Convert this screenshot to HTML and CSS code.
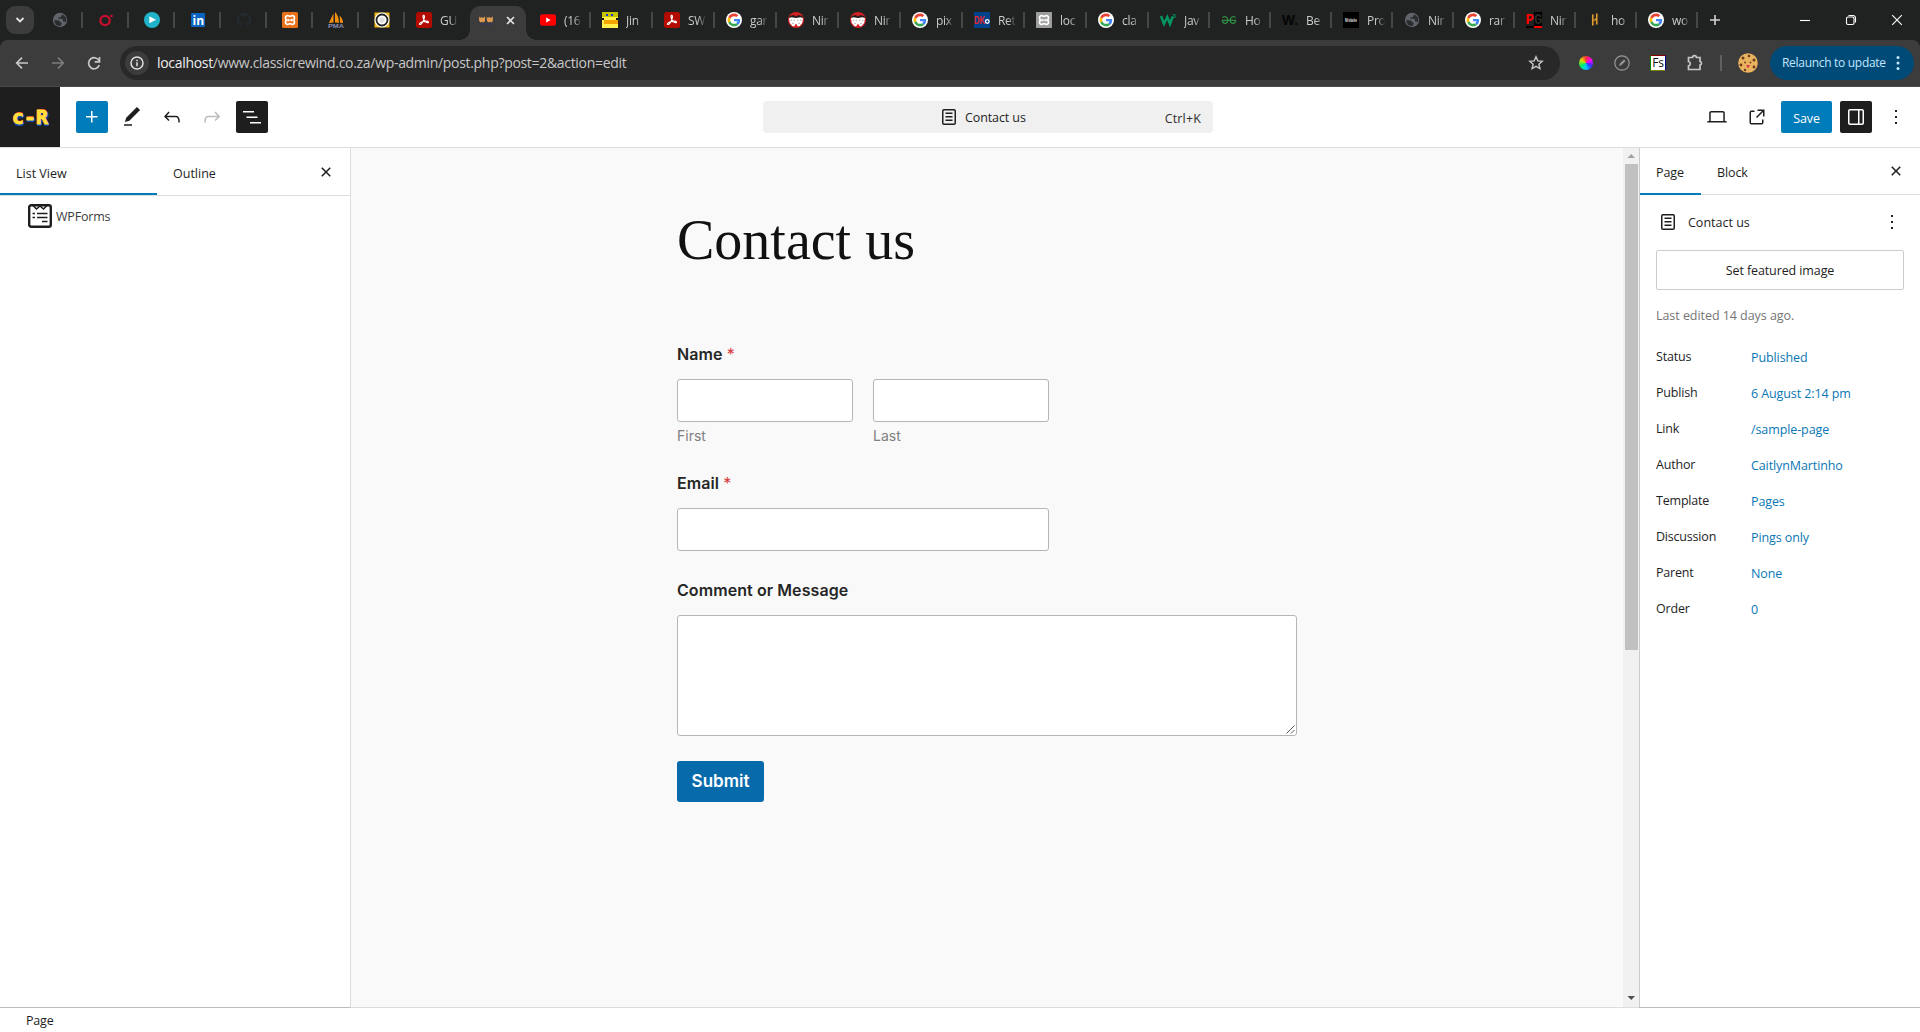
FILE: index.html
```html
<!DOCTYPE html>
<html lang="en">
<head>
<meta charset="utf-8">
<title>Contact us</title>
<link rel="stylesheet" href="styles.css">
</head>
<body>
<svg class="defs" aria-hidden="true">
  <symbol id="google" viewBox="0 0 48 48"><circle cx="24" cy="24" r="24" fill="#fff"/><g transform="translate(4.8 4.8) scale(.8)"><path fill="#EA4335" d="M24 9.5c3.54 0 6.71 1.22 9.21 3.6l6.85-6.85C35.9 2.38 30.47 0 24 0 14.62 0 6.51 5.38 2.56 13.22l7.98 6.19C12.43 13.72 17.74 9.5 24 9.5z"/><path fill="#4285F4" d="M46.98 24.55c0-1.57-.15-3.09-.38-4.55H24v9.02h12.94c-.58 2.96-2.26 5.48-4.78 7.18l7.73 6c4.51-4.18 7.09-10.36 7.09-17.65z"/><path fill="#FBBC05" d="M10.53 28.59c-.48-1.45-.76-2.99-.76-4.59s.27-3.14.76-4.59l-7.98-6.19C.92 16.46 0 20.12 0 24c0 3.88.92 7.54 2.56 10.78l7.97-6.19z"/><path fill="#34A853" d="M24 48c6.48 0 11.93-2.13 15.89-5.81l-7.73-6c-2.15 1.45-4.92 2.3-8.16 2.3-6.26 0-11.57-4.22-13.47-9.91l-7.98 6.19C6.51 42.62 14.62 48 24 48z"/></g></symbol>
  <symbol id="globe" viewBox="0 0 16 16"><circle cx="8" cy="8" r="7.2" fill="#60646a"/><path d="M2.300 8.300h3.200c1.500 0 2.300.8 2.300 2h1.700v2.200L8 14.200C4.800 14.200 2.300 11.500 2.300 8.300zM9.500 2.200v1.600c0 .9-.7 1.500-1.600 1.500H6.400v1.500h3.300c.8 0 1.300.6 1.300 1.400v1.300h1.200c.7 0 1.200.4 1.400 1 1.400-2.300 1-6.600-4.100-8.300z" fill="#202221" opacity=".85"/></symbol>
  <symbol id="acrobat" viewBox="0 0 16 16"><rect width="16" height="16" rx="2.500" fill="#b30b00"/><path d="M7.400 3.300c1.600-.4 1 2.600.2 4.800-.8 2-2.500 4.600-3.700 4.400-1.200-.4.500-2.300 3.200-2.900 2.300-.6 5.100-.6 5.400.5.100 1.100-2 .8-3.500-1C7.400 7.200 6.300 3.800 7.400 3.300z" fill="none" stroke="#fff" stroke-width="1.200"/></symbol>
  <symbol id="xampp" viewBox="0 0 16 16"><path d="M4.800 3.700c1.500-.6 2.200.6 3.200.6s1.700-1.200 3.200-.6c2 .9 1.300 2.900.5 4.300.8 1.400 1.500 3.400-.5 4.300-1.500.6-2.200-.6-3.200-.6s-1.700 1.200-3.200.6c-2-.9-1.300-2.900-.5-4.300-.8-1.400-1.500-3.400.5-4.300z" fill="none" stroke="#fff" stroke-width="1.700"/><path d="M6 6.700v2.800M10 6.700v2.800M6 8.100h4" stroke="#fff" stroke-width="1.300"/></symbol>
  <symbol id="ninja" viewBox="0 0 16 16"><circle cx="8" cy="8" r="8" fill="#d42025"/><path d="M1 6.500c1.500-2.500 5.500-2.500 7-.5 1.500-2 5.500-2 7 .5l-.8 4.500-2.700 3.200H9.700L8 11.500l-1.700 2.700H4.500L1.800 11z" fill="#fff"/><path d="M.8 6C1.500 3 6 2.500 8 4.800c2-2.300 6.500-1.800 7.200 1.200l-2.700-.8L8 6l-4.500-.8z" fill="#221c1c"/><path d="M2.800 8.200h1.300M5.700 8.200H7M9.200 8.200h1.300M12 8.200h1.300M4.200 11.300h1.500M10.300 11.300h1.500" stroke="#777" stroke-width=".7"/></symbol>
  <symbol id="plus" viewBox="0 0 24 24"><path d="M11 12.500V17.500H12.500V12.500H17.500V11H12.500V6H11V11H6V12.500H11Z"/></symbol>
  <symbol id="page" viewBox="0 0 24 24"><path d="M15.500 7.500h-7V9h7V7.500Zm-7 3.500h7v1.500h-7V11Zm7 3.500h-7V16h7v-1.500Z"/><path fill-rule="evenodd" d="M17 4H7a2 2 0 0 0-2 2v12a2 2 0 0 0 2 2h10a2 2 0 0 0 2-2V6a2 2 0 0 0-2-2ZM7 5.500h10a.5.5 0 0 1 .5.5v12a.5.5 0 0 1-.5.5H7a.5.5 0 0 1-.5-.5V6a.5.5 0 0 1 .5-.5Z"/></symbol>
  <symbol id="more" viewBox="0 0 24 24"><path d="M13 19h-2v-2h2v2zm0-6h-2v-2h2v2zm0-6h-2V5h2v2z"/></symbol>
  <symbol id="close" viewBox="0 0 24 24"><path d="M12 13.060l3.712 3.713 1.061-1.060L13.061 12l3.712-3.712-1.060-1.060L12 10.938 8.288 7.227l-1.061 1.060L10.939 12l-3.712 3.712 1.060 1.061L12 13.061z"/></symbol>
</svg>

<header class="tabstrip">
  <button class="tab-search"><svg width="10" height="8" viewBox="0 0 10 8"><path d="M1.500 2 5 5.500 8.500 2" fill="none" stroke="#e3e3e3" stroke-width="1.800"/></svg></button>
  <div class="pinned"><svg class="fav"><use href="#globe"/></svg></div>
  <div class="pinned"><svg class="fav" viewBox="0 0 16 16"><circle cx="7" cy="8.500" r="4.700" fill="none" stroke="#c8102e" stroke-width="2.200"/><circle cx="13.500" cy="4" r="1.300" fill="#c8102e"/></svg></div>
  <div class="pinned"><svg class="fav" viewBox="0 0 16 16"><circle cx="8" cy="8" r="8" fill="#1fb2c9"/><path d="M5.300 4.300v7L12 7.800z" fill="#fff"/></svg></div>
  <div class="pinned"><svg class="fav" viewBox="0 0 16 16"><rect x="1" y="1" width="14" height="14" rx="1" fill="#0a66c2"/><text x="2.600" y="12.800" class="fav-in">in</text></svg></div>
  <div class="pinned"><svg class="fav" viewBox="0 0 16 16"><path fill="#24292f" d="M8 .5a7.500 7.500 0 0 0-2.400 14.600c.4.100.5-.2.500-.4v-1.400c-2 .5-2.500-.9-2.500-.9-.3-.8-.8-1-.8-1-.7-.5 0-.5 0-.5.700.1 1.100.8 1.100.8.700 1.200 1.800.8 2.200.6.100-.5.300-.8.500-1-1.700-.2-3.400-.8-3.400-3.700 0-.8.300-1.500.8-2-.1-.2-.4-1 .1-2 0 0 .6-.2 2 .8a7 7 0 0 1 3.800 0c1.400-1 2-.8 2-.8.500 1 .2 1.800.1 2 .5.500.8 1.200.8 2 0 2.900-1.700 3.500-3.400 3.700.3.200.5.700.5 1.400v2c0 .2.100.5.500.4A7.500 7.500 0 0 0 8 .5z"/></svg></div>
  <div class="pinned"><svg class="fav" viewBox="0 0 16 16"><rect width="16" height="16" rx="1.500" fill="#e8711a"/><use href="#xampp" width="16" height="16"/></svg></div>
  <div class="pinned"><svg class="fav" viewBox="0 0 16 16"><path d="M5.500 1.500v9L.8 11zM7 0v10.500l4 .3C11 6 9 2 7 0zM11.500 3.500c.7 3 .5 5 .3 7.300L15 11c0-3-1.500-6-3.500-7.500z" fill="#f29111"/><text x="0" y="15.800" textLength="16" lengthAdjust="spacingAndGlyphs" class="fav-pma">PMA</text></svg></div>
  <div class="pinned"><svg class="fav" viewBox="0 0 16 16"><rect x=".5" y=".5" width="15" height="15" fill="#f3b51b"/><circle cx="8" cy="8" r="7.500" fill="#fff"/><circle cx="8" cy="8" r="5.500" fill="#fff" stroke="#222" stroke-width="1.800"/><path d="M6 5.500h4l1 3-3 3-3-3z" fill="#ddd"/></svg></div>
  <div class="tab tab-last"><svg class="fav"><use href="#acrobat"/></svg><span>GU</span></div>
  <div class="tab-active"><svg class="fav" viewBox="0 0 16 16"><path d="M1 4.500 2.500 6 3.500 4.800 4.700 6 7 4.500V9L5.500 10.500 4 9.800 2.500 10.500 1.200 9zM8.500 4.500 10 6l1.200-1.200L12.500 6 15 4.500 14.800 9l-1.300 1.500-1.500-.7-1.500.7L9 9z" fill="#dd9a50"/><path d="M1 12h14" stroke="#34345c" stroke-width="1.300"/></svg><svg width="9" height="9" viewBox="0 0 9 9"><path d="M1 1l7 7M8 1L1 8" stroke="#e3e3e3" stroke-width="1.600"/></svg></div>
  <div class="tab wide-tab"><svg class="fav" viewBox="0 0 16 16"><rect y="2.300" width="16" height="11.400" rx="2.500" fill="#f00"/><path d="M6.200 5.500v5L10.700 8z" fill="#fff"/></svg><span>(16</span></div>
  <div class="tab wide-tab"><svg class="fav" viewBox="0 0 16 16"><path fill="#fff04a" d="M0 0h16v16H0z"/><path fill="#c5c400" d="M0 0h16v5H0z"/><path fill="#1c35d8" d="M4 2h2v2H4zM9 2h2v2H9z"/><path fill="#111" d="M0 6h2v2H0zM14 6h2v2h-2z"/><path fill="#f3a400" d="M2 8h14v4H2z"/></svg><span>Jin</span></div>
  <div class="tab wide-tab"><svg class="fav"><use href="#acrobat"/></svg><span>SW</span></div>
  <div class="tab wide-tab"><svg class="fav"><use href="#google"/></svg><span>gar</span></div>
  <div class="tab wide-tab"><svg class="fav"><use href="#ninja"/></svg><span>Nir</span></div>
  <div class="tab wide-tab"><svg class="fav"><use href="#ninja"/></svg><span>Nir</span></div>
  <div class="tab wide-tab"><svg class="fav"><use href="#google"/></svg><span>pix</span></div>
  <div class="tab wide-tab"><svg class="fav" viewBox="0 0 16 16"><path fill="#00438a" d="M0 0h16v16H0z"/><text x="0" y="12" textLength="11" lengthAdjust="spacingAndGlyphs" class="fav-dk">DK</text><circle cx="13.300" cy="9.500" r="1.800" fill="none" stroke="#fff" stroke-width="1.300"/></svg><span>Ret</span></div>
  <div class="tab wide-tab"><svg class="fav" viewBox="0 0 16 16"><path fill="#9d9d9d" d="M0 0h16v16H0z"/><use href="#xampp" width="16" height="16"/></svg><span>loc</span></div>
  <div class="tab wide-tab"><svg class="fav"><use href="#google"/></svg><span>cla</span></div>
  <div class="tab"><svg class="fav" viewBox="0 0 16 16"><path d="M1 4l3 8 3.300-7 2.700 7 2.700-7.500" fill="none" stroke="#059862" stroke-width="2.400"/><text x="12.600" y="6" class="fav-w3">3</text></svg><span>Jav</span></div>
  <div class="tab"><svg class="fav" viewBox="0 0 16 16"><path d="M1 8.300h14M1.500 5.500C4 3.800 6.800 5 6.800 8c0 4-5 4.600-5.500.5M14.500 5.500C12 3.800 9.200 5 9.200 8c0 4 5 4.600 5.500.5" fill="none" stroke="#2f8d46" stroke-width="1.300"/></svg><span>Ho</span></div>
  <div class="tab"><svg class="fav" viewBox="0 0 16 16"><text x="0" y="13" textLength="16" lengthAdjust="spacingAndGlyphs" class="fav-w">W.</text></svg><span>Be</span></div>
  <div class="tab"><svg class="fav" viewBox="0 0 16 16"><path fill="#000" d="M0 0h16v16H0z"/><text x="2" y="9.500" textLength="12" lengthAdjust="spacingAndGlyphs" class="fav-mk">Mixkeke</text></svg><span>Pro</span></div>
  <div class="tab"><svg class="fav"><use href="#globe"/></svg><span>Nir</span></div>
  <div class="tab"><svg class="fav"><use href="#google"/></svg><span>rar</span></div>
  <div class="tab"><svg class="fav" viewBox="0 0 16 16"><path fill="#000" d="M8 0h8v14H0v2h8v-2H8z"/><text x="-.5" y="11.500" class="fav-p">P</text><text x="8" y="11.500" class="fav-g">G</text><path fill="#f00" d="M8 14h8v2H8z"/></svg><span>Nir</span></div>
  <div class="tab"><svg class="fav" viewBox="0 0 16 16"><path d="M5.800 2.500v11M9.800 1.500v11M5.500 9l4.800-2.500" stroke="#dfa032" stroke-width="1.700"/><path d="M7 3.500v9.500M10.900 2v9.500" stroke="#693c18" stroke-width=".7"/></svg><span>ho</span></div>
  <div class="tab"><svg class="fav"><use href="#google"/></svg><span>wo</span></div>
  <svg class="new-tab" width="12" height="12" viewBox="0 0 12 12"><path d="M6 1v10M1 6h10" stroke="#d4d4d4" stroke-width="1.600"/></svg>
  <div class="window-controls">
    <svg width="12" height="12" viewBox="0 0 12 12"><path d="M1 6.500h10"/></svg>
    <svg width="12" height="12" viewBox="0 0 12 12"><rect x="1.500" y="3" width="7.500" height="7.500" rx="1.500"/><path d="M3.500 1.500H8a2.500 2.500 0 0 1 2.500 2.500v4.500"/></svg>
    <svg width="12" height="12" viewBox="0 0 12 12"><path d="M1.200 1.200l9.600 9.600M10.800 1.200l-9.600 9.600"/></svg>
  </div>
</header>

<nav class="toolbar">
  <div class="nav-buttons">
    <svg viewBox="0 0 20 20"><path d="M16 10H5M10 4.700 4.700 10l5.300 5.300"/></svg>
    <svg class="dim" viewBox="0 0 20 20"><path d="M4 10h11M10 4.700l5.300 5.300-5.300 5.300"/></svg>
    <svg viewBox="0 0 20 20"><path d="M15.300 8.500A5.500 5.500 0 1 0 15.300 12M15.500 4v4.800H10.700"/></svg>
  </div>
  <div class="address">
    <span class="info"><svg width="16" height="16" viewBox="0 0 16 16"><circle cx="8" cy="8" r="6" fill="none" stroke="#dedede" stroke-width="1.500"/><path d="M8 7.200v4M8 4.700v1.500" stroke="#dedede" stroke-width="1.500"/></svg></span>
    <span class="url"><b>localhost</b>/www.classicrewind.co.za/wp-admin/post.php?post=2&amp;action=edit</span>
    <svg class="star" width="16" height="16" viewBox="0 0 16 16"><path d="M8 1.800l1.800 4.100 4.400.4-3.300 2.900 1 4.400L8 11.300l-3.900 2.300 1-4.400-3.300-2.900 4.400-.4z" fill="none" stroke="#c7c7c7" stroke-width="1.400"/></svg>
  </div>
  <div class="extensions">
    <i class="wheel"></i>
    <svg width="16" height="16" viewBox="0 0 16 16"><circle cx="8" cy="8" r="7.200" fill="none" stroke="#9a9a9a" stroke-width="1.200"/><path d="M5 11l1-2.500 4-4L11.500 6l-4 4z" fill="#9a9a9a"/></svg>
    <span class="fs">Fs</span>
    <svg width="18" height="18" viewBox="0 0 18 18"><path d="M3 3.500h3.600a1.900 1.900 0 0 1 3.800 0H14v3.900a1.900 1.900 0 0 1 0 3.700V15.500H2.500v-3.700a2.200 2.200 0 0 0 0-4.300V3.500z" fill="none" stroke="#c7c7c7" stroke-width="1.700"/></svg>
  </div>
  <svg class="avatar" width="20" height="20" viewBox="0 0 20 20"><circle cx="10" cy="10" r="9.800" fill="#e9b35f"/><g fill="#6b3a1e"><circle cx="5" cy="5" r="1.500"/><circle cx="11" cy="3" r="1.300"/><circle cx="16" cy="7" r="1.500"/><circle cx="3" cy="12" r="1.400"/><circle cx="16" cy="14" r="1.400"/><circle cx="7" cy="17" r="1.200"/><circle cx="7" cy="9.500" r=".9"/><circle cx="12.500" cy="9.500" r=".9"/></g><path d="M8 12h4l-2 3.500z" fill="#d83b45"/></svg>
  <button class="relaunch"><span>Relaunch to update</span><svg width="4" height="16" viewBox="0 0 4 16"><g fill="#c2e7ff"><circle cx="2" cy="2.500" r="1.500"/><circle cx="2" cy="8" r="1.500"/><circle cx="2" cy="13.500" r="1.500"/></g></svg></button>
</nav>

<section class="editor-header">
  <div class="site-logo"><span>c-R</span></div>
  <div class="tools">
    <button class="ibtn primary"><svg><use href="#plus"/></svg></button>
    <button class="ibtn"><svg viewBox="0 0 24 24"><path d="m20.100 5.100L16.900 2 6.200 12.700l-1.300 4.400 4.500-1.300L20.100 5.100zM4 20.800h8v-1.500H4v1.500z"/></svg></button>
    <button class="ibtn"><svg viewBox="0 0 24 24"><path d="M18.300 11.700c-.6-.6-1.400-.9-2.300-.9H6.700l2.900-3.300-1.100-1-4.500 5L8.500 16l1-1-2.700-2.700H16c.5 0 .9.200 1.300.5 1 1 1 3.400 1 4.500v.3h1.500v-.2c0-1.500 0-4.300-1.500-5.700z"/></svg></button>
    <button class="ibtn disabled"><svg viewBox="0 0 24 24"><path d="M15.600 6.500l-1.100 1 2.900 3.300H8c-.9 0-1.700.3-2.300.9-1.400 1.500-1.400 4.200-1.400 5.600v.2h1.500v-.3c0-1.100 0-3.500 1-4.500.3-.3.700-.5 1.300-.5h9.200L14.500 15l1.100 1.100 4.600-4.600-4.600-5z"/></svg></button>
    <button class="ibtn pressed"><svg viewBox="0 0 24 24"><path d="M3 6h11v1.500H3V6Zm3.500 5.500h11V13h-11v-1.500ZM21 17H10v1.500h11V17Z"/></svg></button>
  </div>
  <div class="command"><svg class="i24"><use href="#page"/></svg><span class="doc-title">Contact us</span><span class="shortcut">Ctrl+K</span></div>
  <div class="actions">
    <button class="ibtn"><svg viewBox="0 0 24 24"><path fill-rule="evenodd" d="M20.500 16h-.7V8c0-1.100-.9-2-2-2H6.200c-1.100 0-2 .9-2 2v8h-.7c-.8 0-1.500.7-1.500 1.500h20c0-.8-.7-1.500-1.500-1.500zM5.700 8c0-.3.200-.5.500-.5h11.600c.3 0 .5.200.5.500v8H5.700V8z"/></svg></button>
    <button class="ibtn"><svg viewBox="0 0 24 24"><path d="M19.500 4.500h-7V6h4.440l-5.970 5.970 1.060 1.060L18 7.060v4.440h1.500v-7Zm-13 1a2 2 0 0 0-2 2v10a2 2 0 0 0 2 2h10a2 2 0 0 0 2-2v-3H17v3a.5.5 0 0 1-.5.5h-10a.5.5 0 0 1-.5-.5v-10a.5.5 0 0 1 .5-.5h3V5.500h-3Z"/></svg></button>
    <button class="save">Save</button>
    <button class="ibtn pressed"><svg viewBox="0 0 24 24"><path fill-rule="evenodd" d="M18 4H6c-1.100 0-2 .9-2 2v12c0 1.100.9 2 2 2h12c1.100 0 2-.9 2-2V6c0-1.100-.9-2-2-2zm-4 14.500H6c-.3 0-.5-.2-.5-.5V6c0-.3.2-.5.5-.5h8v13zm4.500-.5c0 .3-.2.5-.5.5h-2.500v-13H18c.3 0 .5.200.5.500v12z"/></svg></button>
    <button class="ibtn"><svg><use href="#more"/></svg></button>
  </div>
</section>

<main class="workspace">
  <aside class="list-panel">
    <div class="list-tabs"><div class="ltab on">List View</div><div class="ltab">Outline</div><svg class="i24"><use href="#close"/></svg></div>
    <div class="block-row">
      <svg width="24" height="24" viewBox="0 0 24 24"><rect x="1.200" y="1.200" width="21.600" height="21.600" rx="2" fill="#fff" stroke="#1e1e1e" stroke-width="2.400"/><path d="M5 1.500 8.500 5 12 2l3.500 3L19 1.500M4.500 9.500H7M9 9.500h10.500M4.500 13.500H7M9 13.500h10.500M14 17.500h5.500" fill="none" stroke="#1e1e1e" stroke-width="1.500"/></svg>
      <span>WPForms</span>
    </div>
  </aside>
  <div class="canvas">
    <article class="post">
      <h1>Contact us</h1>
      <label class="name">Name <em>*</em></label>
      <div class="pair"><div><div class="field"></div><small>First</small></div><div><div class="field"></div><small>Last</small></div></div>
      <label class="email">Email <em>*</em></label>
      <div class="field wide"></div>
      <label class="comment">Comment or Message</label>
      <div class="area"><svg width="9" height="9" viewBox="0 0 9 9"><path d="M.5 8.500l8-8M5 8.500l3.500-3.500" stroke="#555"/></svg></div>
      <button class="submit">Submit</button>
    </article>
    <div class="scrollbar">
      <svg width="16" height="16" viewBox="0 0 16 16"><path d="M4.500 10h7.500L8.250 6z" fill="#a3a3a3"/></svg>
      <div class="thumb"></div>
      <svg width="16" height="16" viewBox="0 0 16 16"><path d="M4.500 5h7.500L8.250 9z" fill="#505050"/></svg>
    </div>
  </div>
  <aside class="settings">
    <div class="set-tabs"><div class="stab on">Page</div><div class="stab">Block</div><svg class="i24"><use href="#close"/></svg></div>
    <div class="summary">
      <div class="card"><svg class="i24"><use href="#page"/></svg><span>Contact us</span><svg class="i24 more"><use href="#more"/></svg></div>
      <button class="featured">Set featured image</button>
      <p class="edited">Last edited 14 days ago.</p>
      <dl>
        <dt>Status</dt><dd>Published</dd>
        <dt>Publish</dt><dd>6 August 2:14 pm</dd>
        <dt>Link</dt><dd>/sample-page</dd>
        <dt>Author</dt><dd>CaitlynMartinho</dd>
        <dt>Template</dt><dd>Pages</dd>
        <dt>Discussion</dt><dd>Pings only</dd>
        <dt>Parent</dt><dd>None</dd>
        <dt>Order</dt><dd>0</dd>
      </dl>
    </div>
  </aside>
</main>
<footer class="breadcrumb">Page</footer>
</body>
</html>
```
FILE: styles.css
```css
* { box-sizing: border-box; }
body { margin: 0; width: 1920px; height: 1032px; overflow: hidden; display: flex; flex-direction: column; background: #fff; color: #1e1e1e; font: 12.5px/20px "Open Sans", "Noto Sans", sans-serif; letter-spacing: -.2px; }
button { border: 0; padding: 0; background: none; font: inherit; letter-spacing: inherit; color: inherit; }
svg { display: block; flex: none; }
.defs { position: absolute; width: 0; height: 0; }
.i24 { width: 24px; height: 24px; fill: #1e1e1e; }

/* browser tab strip */
.tabstrip { height: 40px; flex: none; display: flex; align-items: center; background: #202221; padding-left: 6px; }
.tab-search { width: 28px; height: 28px; margin-right: 3px; border-radius: 9px; background: #3c3c3c; display: grid; place-items: center; }
.fav { width: 16px; height: 16px; }
.pinned { width: 46px; height: 16px; padding-left: 15px; border-right: 2px solid #444746; }
.tab { width: 61px; height: 16px; padding-left: 11px; border-right: 2px solid #444746; display: flex; gap: 8px; flex: none; }
.wide-tab { width: 62px; }
.tab span { width: 20px; margin-right: -2px; white-space: nowrap; color: #c9cbca; font-size: 12px; line-height: 18px; height: 20px; letter-spacing: -.3px; -webkit-mask-image: linear-gradient(90deg, #000 50%, transparent 90%); mask-image: linear-gradient(90deg, #000 50%, transparent 90%); }
.tab-last { width: 65px; border: 0; }
.tab-active { position: relative; width: 56px; height: 34px; align-self: flex-end; margin-right: 3px; padding: 0 11px 0 8px; border-radius: 10px 10px 0 0; background: #3c3c3c; display: flex; align-items: center; justify-content: space-between; }
.tab-active::before, .tab-active::after { content: ""; position: absolute; bottom: 0; width: 10px; height: 10px; }
.tab-active > svg { margin-top: -6px; }
.tab-active::before { left: -10px; background: radial-gradient(circle at 0 0, transparent 9.500px, #3c3c3c 10px); }
.tab-active::after { right: -10px; background: radial-gradient(circle at 100% 0, transparent 9.500px, #3c3c3c 10px); }
.new-tab { margin-left: 11px; }
.window-controls { margin-left: auto; padding-right: 17px; display: flex; gap: 34px; }
.window-controls svg { fill: none; stroke: #fff; stroke-width: 1.100; }
.fav text { letter-spacing: 0; }
.fav-in { font: 700 12px "Open Sans", sans-serif; fill: #fff; }
.fav-pma { font: 700 6px "Liberation Sans", sans-serif; fill: #8b8db5; }
.fav-dk { font: 700 11px "Liberation Sans", sans-serif; fill: #ec2227; }
.fav-w3 { font: 700 6px "Liberation Sans", sans-serif; fill: #059862; }
.fav-w { font: 700 14px "Liberation Sans", sans-serif; fill: #050505; }
.fav-mk { font: 700 5px "Liberation Sans", sans-serif; fill: #ddd; }
.fav-p, .fav-g { font: 700 14px "Liberation Mono", monospace; fill: #f00; }
.fav-g { fill: #2a2a2a; }

/* browser toolbar */
.toolbar { height: 47px; flex: none; display: flex; align-items: center; background: linear-gradient(#3c3c3c 46px, #4a4a4a 46px); padding: 0 6px 1px 12px; position: relative; }
.toolbar::before, .toolbar::after { content: ""; position: absolute; top: 0; width: 7px; height: 7px; }
.toolbar::before { left: 0; background: radial-gradient(circle at 100% 100%, transparent 6.500px, #202221 7px); }
.toolbar::after { right: 0; background: radial-gradient(circle at 0 100%, transparent 6.500px, #202221 7px); }
.nav-buttons { display: flex; gap: 16px; }
.nav-buttons svg { width: 20px; height: 20px; fill: none; stroke: #c7c7c7; stroke-width: 1.700; }
.nav-buttons .dim { stroke: #7c7c7c; }
.address { width: 1440px; height: 34px; margin-left: 16px; border-radius: 17px; background: #282828; display: flex; align-items: center; padding: 0 16px 0 5px; }
.info { width: 24px; height: 24px; border-radius: 50%; background: #3c3c3c; display: grid; place-items: center; }
.url { margin-left: 8px; color: #c7c7c7; font-size: 14px; letter-spacing: -.31px; }
.url b { font-weight: 400; color: #eee; }
.star { margin-left: auto; }
.extensions { display: flex; align-items: center; gap: 20px; margin-left: 19px; }
.wheel { width: 14px; height: 14px; margin-right: 1px; border-radius: 50%; background: conic-gradient(#f33, #f0f, #33f, #0cf, #0e6, #dd0, #f33); }
.fs { width: 16px; height: 16px; background: #fff; border: 1px solid; border-color: #8b0000 #00008b #808000 #080; color: #111; font: 12px/14px "Open Sans", sans-serif; text-align: center; }
.avatar { margin-left: 34px; }
.extensions::after { content: ""; width: 2px; height: 16px; background: #5f6161; margin-left: -4px; margin-right: -18px; }
.relaunch { width: 144px; height: 34px; margin-left: auto; border-radius: 17px; background: #004a77; color: #c2e7ff; display: flex; align-items: center; justify-content: space-between; padding: 0 14px 0 12px; font-size: 12px; letter-spacing: -.3px; white-space: nowrap; }

/* editor top bar */
.editor-header { height: 61px; flex: none; border-bottom: 1px solid #ddd; display: flex; align-items: center; }
.site-logo { width: 60px; height: 60px; background: #1e1e1e; display: grid; place-items: center; }
.site-logo span { font: 700 20px/20px "DejaVu Sans Mono", monospace; letter-spacing: 0; color: #ffe03a; -webkit-text-stroke: .8px #ffe03a; text-shadow: -1px 0 #e8232a, 0 -1px #e8232a, 1px 2px #0c47b0, 0 2px #0c47b0, 2px 1px #0c47b0; }
.tools, .actions { display: flex; gap: 8px; }
.tools { margin-left: 16px; }
.ibtn { width: 32px; height: 32px; border-radius: 2px; display: grid; place-items: center; color: #1e1e1e; }
.ibtn svg { width: 24px; height: 24px; fill: currentColor; }
.primary { background: #007cba; color: #fff; }
.pressed { background: #1e1e1e; color: #fff; }
.disabled { color: #bbb; }
.command { width: 450px; height: 32px; margin-left: 495px; border-radius: 4px; background: #f0f0f0; display: flex; align-items: center; padding: 0 12px 0 174px; }
.doc-title { margin: 1px 0 0 4px; letter-spacing: -.1px; }
.shortcut { margin: 3px 0 0 auto; color: #2f2f2f; letter-spacing: .15px; }
.actions { margin-left: auto; padding-right: 8px; }
.save { width: 51px; height: 32px; border-radius: 2px; background: #007cba; color: #fff; padding-top: 3px; letter-spacing: -.1px; }

/* workspace */
.workspace { height: 860px; flex: none; display: flex; }
.list-panel { width: 351px; border-right: 1px solid #ddd; border-bottom: 1px solid #bbb; }
.list-tabs { height: 48px; border-bottom: 1px solid #ddd; display: flex; letter-spacing: 0; }
.ltab { width: 157px; padding: 16px 16px 0; font-weight: 500; height: 47px; }
.ltab.on { border-bottom: 2px solid #007cba; }
.list-tabs .i24 { margin: 12px 0 0; }
.block-row { display: flex; align-items: center; gap: 4px; padding: 8px 0 0 28px; color: #3c3c3c; }
.block-row span { margin-top: 2px; }
.canvas { width: 1288px; background: #f9f9f9; border-bottom: 1px solid #ddd; display: flex; justify-content: space-between; }
.post { width: 620px; margin-left: 326px; font-family: Inter, sans-serif; display: flex; flex-direction: column; align-items: flex-start; letter-spacing: 0; color: #262626; }
h1 { margin: 60px 0 72px; font: 400 56px/64px "Liberation Serif", serif; letter-spacing: 0; color: #111; }
label { font-size: 16px; line-height: 20px; font-weight: 600; margin-bottom: 15px; letter-spacing: .08px; }
label em { font-style: normal; font-weight: 400; color: #d63637; }
.pair { display: flex; gap: 20px; }
.field { width: 176px; height: 43px; border: 1px solid #b5b5b5; border-radius: 3px; background: #fff; }
.wide { width: 372px; }
small { display: block; font-size: 14px; line-height: 20px; margin-top: 4px; color: #808080; }
.email { margin-top: 27px; }
.comment { margin-top: 29px; }
.area { width: 620px; height: 121px; border: 1px solid #b5b5b5; border-radius: 3px; background: #fff; display: flex; align-items: flex-end; justify-content: flex-end; padding: 1px; }
.submit { width: 87px; height: 41px; margin-top: 25px; border-radius: 3px; background: #066aab; color: #fff; font: 600 17px/41px Inter, sans-serif; }
.scrollbar { width: 16px; background: #f1f1f1; display: flex; flex-direction: column; }
.thumb { width: 13px; height: 486px; margin: 0 0 auto 2px; background: #c1c1c1; }

/* settings sidebar */
.settings { width: 281px; border-left: 1px solid #ccc; border-bottom: 1px solid #bbb; }
.set-tabs { height: 47px; border-bottom: 1px solid #ddd; display: flex; font-weight: 500; letter-spacing: -.1px; }
.stab { padding: 15px 16px 0; height: 47px; }
.stab.on { width: 61px; border-bottom: 2px solid #007cba; }
.set-tabs .i24 { margin: 11px 12px 0 auto; }
.summary { padding: 15px 16px 0; }
.card { display: flex; align-items: center; gap: 8px; font-weight: 500; letter-spacing: 0; }
.card span { margin-top: 1px; }
.card .more { margin-left: auto; }
.featured { width: 248px; height: 40px; margin-top: 16px; padding-top: 1px; border: 1px solid #ccc; border-radius: 2px; letter-spacing: -.1px; }
.edited { margin: 16px 0 21px; color: #757575; letter-spacing: -.05px; }
dl { margin: 0; display: grid; grid-template-columns: 95px 1fr; grid-auto-rows: 36px; }
dd { margin: 1px 0 0; color: #0a77b5; letter-spacing: -.1px; }
.breadcrumb { height: 24px; padding: 3px 0 0 26px; }
```
